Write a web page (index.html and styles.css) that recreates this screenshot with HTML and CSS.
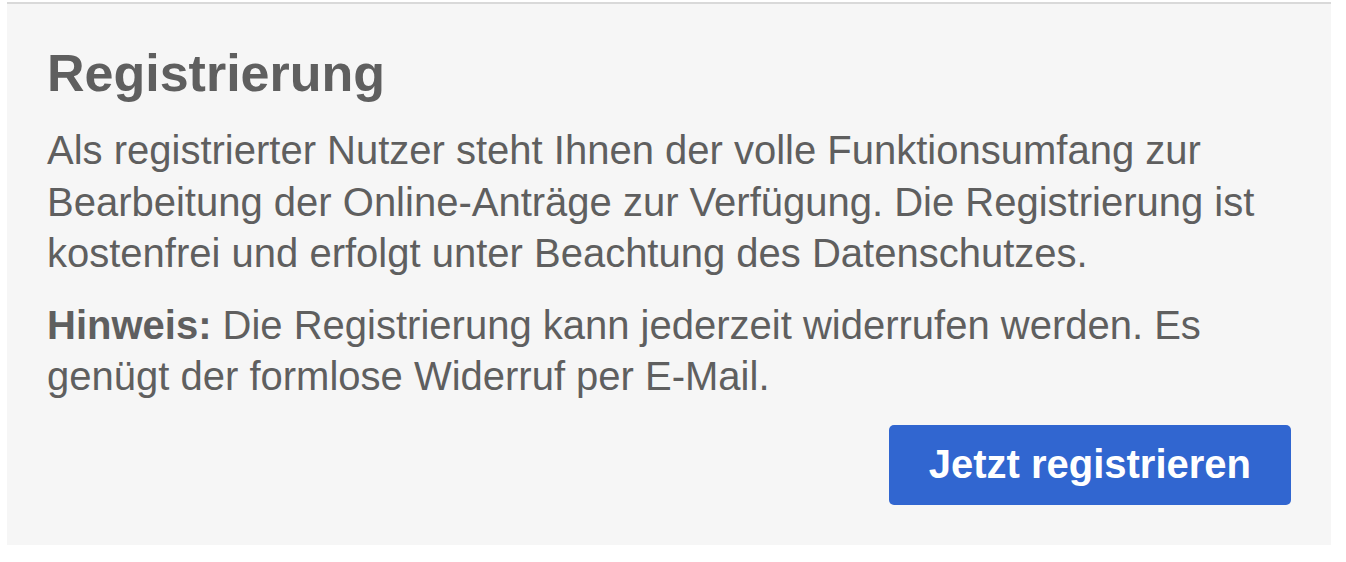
FILE: index.html
```html
<!DOCTYPE html>
<html>

<head>
  <title>Registrierung</title>
  <link rel="stylesheet" href="styles.css">
</head>

<body>
  <div class="panel">
    <h1 class="panel-title">Registrierung</h1>
    <p class="panel-text">Als registrierter Nutzer steht Ihnen der volle Funktionsumfang zur Bearbeitung der Online-Anträge zur Verfügung. Die Registrierung ist kostenfrei und erfolgt unter Beachtung des Datenschutzes.</p>
    <p class="panel-text"><strong>Hinweis:</strong> Die Registrierung kann jederzeit widerrufen werden. Es genügt der formlose Widerruf per E-Mail.</p>
    <div class="panel-actions">
      <button class="btn-primary" type="button">Jetzt registrieren</button>
    </div>
  </div>
</body>

</html>
```

FILE: styles.css
```css
body {
  margin: 2px 15px 0 7px;
  font-family: "Liberation Sans", Arial, sans-serif;
  color: #5f5f5f;
  background: #fff;
}

.panel {
  background: #f6f6f6;
  border-top: 2px solid #d9d9d9;
  padding: 36px 40px 40px 40px;
}

.panel-title {
  margin: 0 0 18px;
  font-size: 52px;
  line-height: 1.29;
  font-weight: bold;
}

.panel-text {
  margin: 0 0 20px;
  font-size: 40px;
  line-height: 1.29;
}

.panel-text strong {
  font-weight: bold;
}

.panel-actions {
  display: flex;
  justify-content: flex-end;
  margin-top: 22px;
}

.btn-primary {
  padding: 14px 40px;
  border: none;
  border-radius: 5px;
  background-color: #3166d0;
  color: white;
  font-family: "Liberation Sans", Arial, sans-serif;
  font-size: 40px;
  line-height: 1.29;
  font-weight: bold;
  cursor: pointer;
}
```
